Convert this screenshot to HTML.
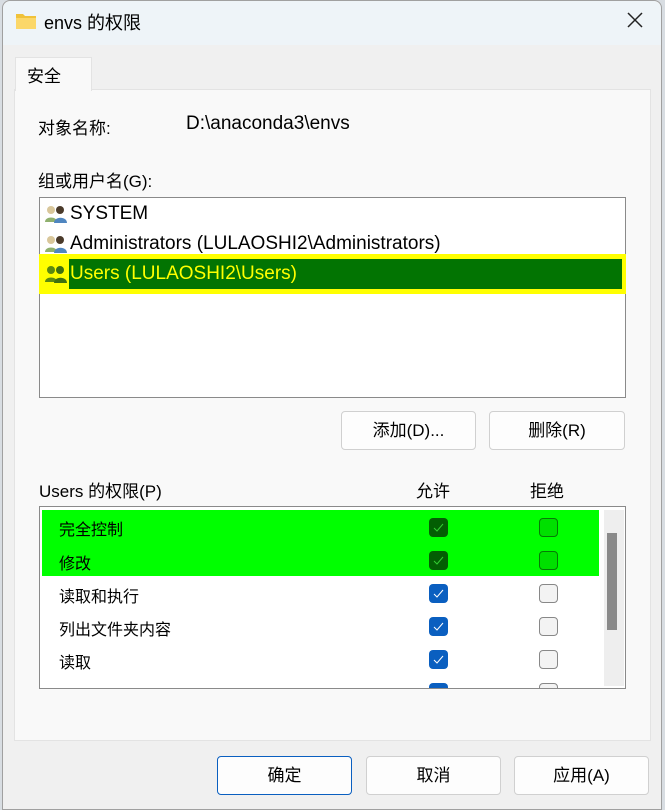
<!DOCTYPE html>
<html><head><meta charset="utf-8"><style>
*{box-sizing:border-box;margin:0;padding:0}
body{width:665px;height:810px;overflow:hidden;background:#d8dde2;font-family:"Segoe UI","Liberation Sans","Noto Sans CJK SC",sans-serif;font-size:16px;color:#000;position:relative}
.win{position:absolute;left:0;top:0;width:665px;height:810px;overflow:hidden}
.frame{position:absolute;left:2px;top:0;width:660px;height:810px;background:#f0f0f0;border:1px solid #a0a0a0;border-radius:8px 8px 0 0}
.title{position:absolute;left:3px;top:1px;width:658px;height:44px;background:#eef4f8;border-radius:8px 8px 0 0}
.abs{position:absolute;white-space:nowrap}
.panel{position:absolute;left:14px;top:89px;width:637px;height:652px;background:#f9f9f9;border:1px solid #e3e3e3}
.tab{position:absolute;left:15px;top:57px;width:77px;height:34px;background:#f9f9f9;border:1px solid #e3e3e3;border-bottom:none}
.box{position:absolute;background:#fff;border:1px solid #8a8a8a}
.btn{position:absolute;height:39px;background:#fdfdfd;border:1px solid #d0d0d0;border-radius:4px;text-align:center;line-height:37px;font-size:17px}
.cb{position:absolute;width:19px;height:19px;border-radius:4px}
.on{background:#0a5fc0}
.off{background:#f3f3f3;border:1px solid #888}
.dk{background:#035e03}
.gn{background:#00e000;border:1px solid #067a06}
.cb svg{position:absolute;left:4px;top:5px}
.icon{position:absolute;width:24px;height:20px}
.la{font-size:19px}
</style></head><body>
<div class="win">
<div class="frame"></div>
<div class="title"></div>
<svg class="abs" style="left:15px;top:12px" width="22" height="18"><path d="M1 2h7l2 2h11v13H1z" fill="#f0c23a"/><path d="M1 6h20v11H1z" fill="#fbd769"/></svg>
<div class="abs" style="left:44px;top:9px;font-size:18px">envs 的权限</div>
<svg class="abs" style="left:627px;top:12px" width="16" height="16"><path d="M1 1L15 15M15 1L1 15" stroke="#222" stroke-width="1.5"/></svg>
<div class="panel"></div>
<div class="tab"></div>
<div class="abs" style="left:27px;top:62px;font-size:17px">安全</div>
<div class="abs" style="left:38px;top:114px;font-size:17px">对象名称:</div>
<div class="abs la" style="left:186px;top:113px">D:\anaconda3\envs</div>
<div class="abs" style="left:38px;top:167px;font-size:17px">组或用户名(G):</div>
<div class="box" style="left:39px;top:197px;width:587px;height:201px"></div>
<div class="abs" style="left:39px;top:254px;width:587px;height:40px;background:#ffff00"></div>
<div class="abs" style="left:69px;top:259px;width:553px;height:30px;background:#027402"></div>
<svg class="icon" style="left:44px;top:204px" viewBox="0 0 24 20"><circle cx="7" cy="6" r="4" fill="#d9c79b"/><path d="M1 18c0-6 12-6 12 0z" fill="#8fb06e"/><circle cx="16" cy="6" r="4" fill="#4a3a2a"/><path d="M10 19c0-7 13-7 13 0z" fill="#4f86c0"/></svg>
<div class="abs la" style="left:70px;top:203px">SYSTEM</div>
<svg class="icon" style="left:44px;top:234px" viewBox="0 0 24 20"><circle cx="7" cy="6" r="4" fill="#d9c79b"/><path d="M1 18c0-6 12-6 12 0z" fill="#8fb06e"/><circle cx="16" cy="6" r="4" fill="#4a3a2a"/><path d="M10 19c0-7 13-7 13 0z" fill="#4f86c0"/></svg>
<div class="abs la" style="left:70px;top:233px">Administrators (LULAOSHI2\Administrators)</div>
<svg class="icon" style="left:44px;top:264px" viewBox="0 0 24 20"><circle cx="7" cy="6" r="4" fill="#5c8a10"/><path d="M1 18c0-6 12-6 12 0z" fill="#5c8a10"/><circle cx="16" cy="6" r="4" fill="#3f7010"/><path d="M10 19c0-7 13-7 13 0z" fill="#3f7010"/></svg>
<div class="abs la" style="left:70px;top:263px;color:#ffff00">Users (LULAOSHI2\Users)</div>
<div class="btn" style="left:341px;top:411px;width:135px">添加(D)...</div>
<div class="btn" style="left:489px;top:411px;width:136px">删除(R)</div>
<div class="abs" style="left:39px;top:477px;font-size:17px">Users 的权限(P)</div>
<div class="abs" style="left:416px;top:477px;font-size:17px">允许</div>
<div class="abs" style="left:530px;top:477px;font-size:17px">拒绝</div>
<div class="box" style="left:39px;top:506px;width:587px;height:183px;overflow:hidden">
 <div class="abs" style="left:2px;top:3px;width:557px;height:66px;background:#00ff00"></div>
 <div class="abs" style="left:564px;top:3px;width:20px;height:176px;background:#eeeeee"></div>
 <div class="abs" style="left:567px;top:26px;width:10px;height:97px;background:#8a8a8a"></div>
 <div class="abs" style="left:19px;top:9px">完全控制</div>
 <div class="abs" style="left:19px;top:43px">修改</div>
 <div class="abs" style="left:19px;top:76px">读取和执行</div>
 <div class="abs" style="left:19px;top:109px">列出文件夹内容</div>
 <div class="abs" style="left:19px;top:142px">读取</div>
 <div class="abs" style="left:19px;top:175px">写入</div>
 <div class="cb dk" style="left:389px;top:11px"><svg width="11" height="9"><path d="M1 5l3 3 6-7" stroke="#3c3" fill="none"/></svg></div>
 <div class="cb dk" style="left:389px;top:44px"><svg width="11" height="9"><path d="M1 5l3 3 6-7" stroke="#3c3" fill="none"/></svg></div>
 <div class="cb on" style="left:389px;top:77px"><svg width="11" height="9"><path d="M1 5l3 3 6-7" stroke="#fff" fill="none"/></svg></div>
 <div class="cb on" style="left:389px;top:110px"><svg width="11" height="9"><path d="M1 5l3 3 6-7" stroke="#fff" fill="none"/></svg></div>
 <div class="cb on" style="left:389px;top:143px"><svg width="11" height="9"><path d="M1 5l3 3 6-7" stroke="#fff" fill="none"/></svg></div>
 <div class="cb on" style="left:389px;top:176px"></div>
 <div class="cb gn" style="left:499px;top:11px"></div>
 <div class="cb gn" style="left:499px;top:44px"></div>
 <div class="cb off" style="left:499px;top:77px"></div>
 <div class="cb off" style="left:499px;top:110px"></div>
 <div class="cb off" style="left:499px;top:143px"></div>
 <div class="cb off" style="left:499px;top:176px"></div>
</div>
<div class="btn" style="left:217px;top:756px;width:135px;border-color:#0a5fc0">确定</div>
<div class="btn" style="left:366px;top:756px;width:135px">取消</div>
<div class="btn" style="left:514px;top:756px;width:135px">应用(A)</div>
</div>
</body></html>
